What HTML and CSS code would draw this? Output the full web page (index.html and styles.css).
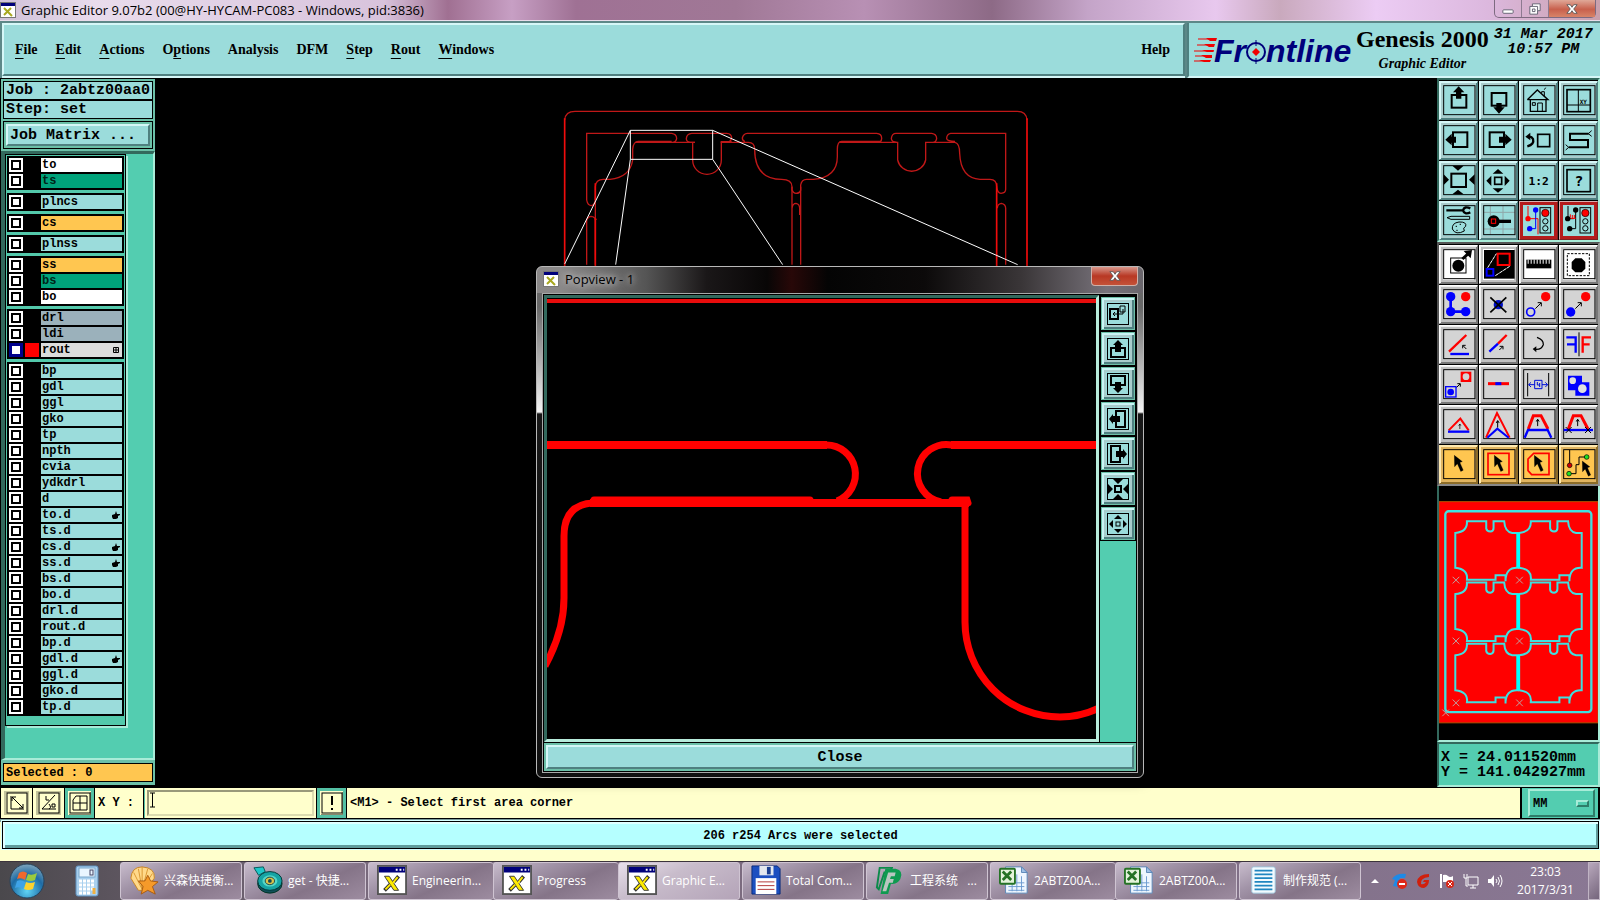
FILE: index.html
```html
<!DOCTYPE html>
<html lang="en">
<head>
    <meta charset="UTF-8">
    <meta name="viewport" content="width=device-width, initial-scale=1.0">
    <title>Graphic Editor 9.07b2</title>
    <link rel="stylesheet" href="styles.css">
</head>
<body>
    <!-- Shared symbols -->
    <svg class="symbols" aria-hidden="true">
        <symbol id="xwin" viewBox="0 0 32 32">
            <rect x="1" y="1" width="30" height="30" fill="#fff" stroke="#555" stroke-width="2"/>
            <rect x="2" y="2" width="28" height="6" fill="#00007b"/>
            <path d="M20 4h2v2h-2zM24 4h2v2h-2zM28 4h1v2h-1z" fill="#fff"/>
            <path d="M8 12h5l10 15h-5z" fill="#ffeb00" stroke="#333"/>
            <path d="M23 12l-5 6M14 21l-6 6" stroke="#333" stroke-width="4"/>
            <path d="M22 13l-5 6M14 21l-5 5" stroke="#ffeb00" stroke-width="2"/>
        </symbol>
        <symbol id="xwin-small" viewBox="0 0 16 16">
            <rect x="0.5" y="0.5" width="15" height="15" fill="#fff" stroke="#777"/>
            <rect x="1" y="1" width="14" height="3" fill="#00007b"/>
            <path d="M4 6L12 14M11 6L4 13" stroke="#a8a820" stroke-width="2"/>
        </symbol>
        <symbol id="frame" viewBox="6 6 105 105">
            <rect x="14" y="14" width="94" height="87" fill="none" stroke="#000" stroke-width="3"/>
        </symbol>
        <symbol id="pointer" viewBox="0 0 40 60">
            <path d="M2 2L28 22L20 25L31 50L23 54L12 29L3 39Z" fill="#000"/>
        </symbol>
        <symbol id="up" viewBox="0 0 12 24">
            <path d="M6 3V24M1 10L6 3L11 10" fill="none" stroke="#000" stroke-width="3"/>
        </symbol>
        <symbol id="sheet" viewBox="0 0 32 32">
            <path d="M7 2H24L30 8V30H7Z" fill="#eef6ff" stroke="#5b86b8"/>
            <path d="M24 2V8H30Z" fill="#9fc0e6" stroke="#5b86b8"/>
            <path d="M10 19H27M10 23H27M10 27H27M14 15V28M19 10V28M24 12V28" stroke="#6c9bd0"/>
            <rect x="1" y="4" width="16" height="16" rx="1" fill="#e4f3dc" stroke="#267326" stroke-width="2"/>
            <path d="M4 7L13 16M13 7L4 16" stroke="#267326" stroke-width="3"/>
        </symbol>
        <symbol id="hand" viewBox="0 0 8 8">
            <path d="M4 0L5 3H8V4L6 5V7L4 8H1L0 6V4L3 3Z"/>
        </symbol>
    </svg>

    <header class="titlebar">
        <svg class="title-icon"><use href="#xwin-small"/></svg>
        <h1>Graphic Editor 9.07b2 (00@HY-HYCAM-PC083 - Windows, pid:3836)</h1>
        <div class="win-controls">
            <button aria-label="Minimize"><svg viewBox="0 0 14 14"><rect x="1" y="8" width="12" height="4" rx="1" fill="#fff" stroke="#556"/></svg></button>
            <button aria-label="Restore"><svg viewBox="0 0 14 14"><path d="M4 1H13V9H10V13H1V4H4Z" fill="#fff" stroke="#556"/><path d="M4 7H7V10H4ZM4 4H10V9" fill="none" stroke="#556"/></svg></button>
            <button class="close" aria-label="Close"><svg viewBox="0 0 14 14"><path d="M1 2H5L7 5L9 2H13L9 7L13 12H9L7 9L5 12H1L5 7Z" fill="#fff" stroke="#555"/></svg></button>
        </div>
    </header>

    <div class="topbar">
        <nav class="menu">
            <a href="#"><u>F</u>ile</a>
            <a href="#"><u>E</u>dit</a>
            <a href="#"><u>A</u>ctions</a>
            <a href="#">O<u>p</u>tions</a>
            <a href="#">Analysis</a>
            <a href="#">DFM</a>
            <a href="#"><u>S</u>tep</a>
            <a href="#"><u>R</u>out</a>
            <a href="#"><u>W</u>indows</a>
            <a href="#" class="help">Help</a>
        </nav>
        <div class="brand">
            <svg class="logo" viewBox="0 0 162 34">
                <path d="M4 5H20M3 11H20M0 17H20M1 22H18M0 27H16" stroke="#f00000" stroke-width="1"/>
                <path d="M12 4H23L22 7H16ZM10 10H21L20 13H15ZM8 16H20L19 18H13ZM7 21H18V24H12ZM5 26H17L16 28H10Z" fill="#f00000"/>
                <text class="logo-text" x="20" y="28">Fr</text>
                <circle cx="62" cy="18" r="9" fill="none" stroke="#00007b" stroke-width="2"/>
                <path d="M62 14L66 18L62 22L58 18Z" fill="#f00000"/>
                <path d="M62 6V12M62 24V30" stroke="#00007b" stroke-width="1"/>
                <text class="logo-text" x="72" y="28">ntline</text>
            </svg>
            <div class="product">
                <strong>Genesis 2000</strong>
                <em>Graphic Editor</em>
            </div>
            <div class="date">31 Mar 2017<br>10:57 PM</div>
        </div>
    </div>

    <div class="workspace">
        <aside class="left-panel">
            <div class="job">Job : 2abtz00aa0</div>
            <div class="job">Step: set</div>
            <div class="matrix"><button>Job Matrix ...</button></div>
            <div class="layers">
                <div class="layer-list">
                    <div class="group">
                        <label class="layer white"><input type="checkbox"><i></i><span>to</span></label>
                        <label class="layer green"><input type="checkbox"><i></i><span>ts</span></label>
                    </div>
                    <div class="group">
                        <label class="layer"><input type="checkbox"><i></i><span>plncs</span></label>
                    </div>
                    <div class="group">
                        <label class="layer orange"><input type="checkbox"><i></i><span>cs</span></label>
                    </div>
                    <div class="group">
                        <label class="layer"><input type="checkbox"><i></i><span>plnss</span></label>
                    </div>
                    <div class="group">
                        <label class="layer orange"><input type="checkbox"><i></i><span>ss</span></label>
                        <label class="layer green"><input type="checkbox"><i></i><span>bs</span></label>
                        <label class="layer white"><input type="checkbox"><i></i><span>bo</span></label>
                    </div>
                    <div class="group">
                        <label class="layer slate"><input type="checkbox"><i></i><span>drl</span></label>
                        <label class="layer slate"><input type="checkbox"><i></i><span>ldi</span></label>
                        <label class="layer current"><input type="checkbox" checked><i></i><span>rout<svg viewBox="0 0 8 8"><path d="M1.5 1.5H6.5V6.5H1.5ZM1 4H7M4 1V7" fill="none" stroke="#000"/></svg></span></label>
                    </div>
                    <div class="group">
                        <label class="layer"><input type="checkbox"><i></i><span>bp</span></label>
                        <label class="layer"><input type="checkbox"><i></i><span>gdl</span></label>
                        <label class="layer"><input type="checkbox"><i></i><span>ggl</span></label>
                        <label class="layer"><input type="checkbox"><i></i><span>gko</span></label>
                        <label class="layer"><input type="checkbox"><i></i><span>tp</span></label>
                        <label class="layer"><input type="checkbox"><i></i><span>npth</span></label>
                        <label class="layer"><input type="checkbox"><i></i><span>cvia</span></label>
                        <label class="layer"><input type="checkbox"><i></i><span>ydkdrl</span></label>
                        <label class="layer"><input type="checkbox"><i></i><span>d</span></label>
                        <label class="layer"><input type="checkbox"><i></i><span>to.d<svg><use href="#hand"/></svg></span></label>
                        <label class="layer"><input type="checkbox"><i></i><span>ts.d</span></label>
                        <label class="layer"><input type="checkbox"><i></i><span>cs.d<svg><use href="#hand"/></svg></span></label>
                        <label class="layer"><input type="checkbox"><i></i><span>ss.d<svg><use href="#hand"/></svg></span></label>
                        <label class="layer"><input type="checkbox"><i></i><span>bs.d</span></label>
                        <label class="layer"><input type="checkbox"><i></i><span>bo.d</span></label>
                        <label class="layer"><input type="checkbox"><i></i><span>drl.d</span></label>
                        <label class="layer"><input type="checkbox"><i></i><span>rout.d</span></label>
                        <label class="layer"><input type="checkbox"><i></i><span>bp.d</span></label>
                        <label class="layer"><input type="checkbox"><i></i><span>gdl.d<svg><use href="#hand"/></svg></span></label>
                        <label class="layer"><input type="checkbox"><i></i><span>ggl.d</span></label>
                        <label class="layer"><input type="checkbox"><i></i><span>gko.d</span></label>
                        <label class="layer"><input type="checkbox"><i></i><span>tp.d</span></label>
                    </div>
                </div>
            </div>
            <div class="selected">Selected : 0</div>
        </aside>

        <main class="canvas">
            <svg class="board" viewBox="0 0 1282 709" preserveAspectRatio="xMinYMin meet">
                <g transform="translate(375 12) scale(.33333)" fill="none" stroke="#c01818" stroke-width="4">
                    <path d="M104 90Q106 64 135 64H1462Q1489 64 1491 90"/>
                    <path d="M170 330V130H425Q440 132 440 146Q438 157 428 157M170 330Q173 347 185 347Q193 345 196 332"/>
                    <path d="M196 524V290Q197 268 220 268H240Q300 262 308 210V178Q310 154 325 154H425M318 157H495"/>
                    <path d="M488 155V210A43 43 0 0 0 574 210V155H605M495 157H480Q469 155 469 146Q470 131 485 130H590Q605 131 605 144Q602 155 595 157"/>
                    <path d="M645 155Q637 152 637 144Q640 131 652 130H1040Q1055 131 1055 145Q1054 157 1045 157"/>
                    <path d="M572 157H655Q674 157 674 178Q674 268 755 268Q786 268 786 290V300Q790 310 798 310Q810 310 812 300V285Q815 268 830 268H850Q922 262 922 200V178Q922 154 935 154H1050"/>
                    <path d="M928 157H1103V210A43 43 0 0 0 1187 210V157H1275Q1289 160 1289 190Q1292 265 1350 268H1380Q1400 268 1400 290Q1402 310 1413 310Q1427 310 1427 298V130H1262Q1250 132 1250 146Q1252 154 1275 154"/>
                    <path d="M1100 157Q1084 157 1084 145Q1086 130 1098 130H1205Q1220 132 1220 146Q1218 157 1210 157"/>
                    <path d="M170 524V390Q175 379 183 379Q195 381 196 388H200M786 290V524M812 290V524M786 355Q788 340 798 340Q809 342 809 355V375M1427 524V355Q1427 342 1414 340Q1402 342 1402 355"/>
                    <path d="M104 85V530M1491 85V530M196 280V330M196 385V530M1400 280V530" stroke="#f00c0c" stroke-width="5"/>
                </g>
                <g transform="translate(375 12) scale(.33333)" fill="none" stroke="#fff" stroke-width="3">
                    <path d="M301 121H548V208H301ZM301 121L104 522M301 208L257 524M548 208L758 524M548 121L1463 524"/>
                </g>
            </svg>

            <section class="popview" aria-label="Popview - 1">
                <div class="pop-title">
                    <svg class="title-icon"><use href="#xwin-small"/></svg>
                    <h2>Popview - 1</h2>
                    <button aria-label="Close window"><svg viewBox="0 0 14 14"><path d="M1 2H5L7 5L9 2H13L9 7L13 12H9L7 9L5 12H1L5 7Z" fill="#fff" stroke="#555"/></svg></button>
                </div>
                <div class="pop-body">
                    <div class="pop-main">
                        <div class="pop-view">
                            <svg viewBox="0 0 549 441" fill="none" stroke="#f00" stroke-width="7">
                                <path d="M0 3H549" stroke-width="4" stroke="#e80c0c"/>
                                <path d="M0 147H280M549 147H404" stroke-width="8"/>
                                <path d="M279 147A29 29 0 0 1 290 203M405 147A29 29 0 0 0 394 204"/>
                                <path d="M43 205H422" stroke-width="8"/>
                                <path d="M47 202H263M405 202H420L421 205" stroke-linecap="round"/>
                                <path d="M47 205Q17 206 17 238V300Q17 333 -2 368"/>
                                <path d="M418 205V324A95 95 0 0 0 513 419Q534 419 552 410"/>
                            </svg>
                        </div>
                        <div class="pop-tools">
                            <button aria-label="Pop out"><svg viewBox="0 0 22 22"><rect x="3" y="6" width="8" height="10" stroke-width="2"/><path d="M13 3H18V9H13ZM16 6V11H6M8 9L6 11L8 13"/></svg></button>
                            <button aria-label="Pan up"><svg viewBox="0 0 22 22"><rect x="4" y="10" width="14" height="9" stroke-width="2"/><path class="s" d="M11 2L16 7H14V14H8V7H6Z"/></svg></button>
                            <button aria-label="Pan down"><svg viewBox="0 0 22 22"><rect x="4" y="3" width="14" height="9" stroke-width="2"/><path class="s" d="M11 20L16 15H14V9H8V15H6Z"/></svg></button>
                            <button aria-label="Pan left"><svg viewBox="0 0 22 22"><rect x="9" y="3" width="9" height="16" stroke-width="2"/><path class="s" d="M2 11L6 6V8H13V14H6V16Z"/></svg></button>
                            <button aria-label="Pan right"><svg viewBox="0 0 22 22"><rect x="4" y="3" width="9" height="16" stroke-width="2"/><path class="s" d="M20 11L16 6V8H9V14H16V16Z"/></svg></button>
                            <button aria-label="Zoom in"><svg viewBox="0 0 22 22"><rect x="8" y="8" width="6" height="6" stroke-width="2"/><path class="s" d="M6 1H16L11 6ZM6 21H16L11 16ZM1 6V16L6 11ZM21 6V16L16 11Z"/></svg></button>
                            <button aria-label="Zoom out"><svg viewBox="0 0 22 22"><rect x="9" y="9" width="4" height="4"/><path class="s" d="M7 6H15L11 2ZM7 16H15L11 20ZM6 7V15L2 11ZM16 7V15L20 11Z"/></svg></button>
                        </div>
                    </div>
                    <div class="pop-close"><button>Close</button></div>
                </div>
            </section>
        </main>

        <aside class="right-panel">
            <div class="tools view-tools">
                <button aria-label="Pan up"><svg viewBox="6 6 105 105"><use href="#frame" x="6" y="6" width="105" height="105"/><rect x="38" y="42" width="44" height="38" stroke-width="6"/><path class="s" d="M59 16L76 34H67V53H51V34H42Z"/></svg></button>
                <button aria-label="Pan down"><svg viewBox="6 6 105 105"><use href="#frame" x="6" y="6" width="105" height="105"/><rect x="38" y="36" width="44" height="38" stroke-width="6"/><path class="s" d="M60 98L43 79H52V66H68V79H77Z"/></svg></button>
                <button aria-label="Home"><svg viewBox="6 6 105 105"><use href="#frame" x="6" y="6" width="105" height="105"/><path d="M25 56L55 27L87 56H25M34 57V91H81V57" stroke-width="4"/><path d="M40 65H49V73H40ZM56 91V66H70V91M68 36V32H76V46M76 26L80 20" stroke-width="3"/></svg></button>
                <button aria-label="XY windows"><svg viewBox="6 6 105 105"><use href="#frame" x="6" y="6" width="105" height="105"/><rect x="24" y="26" width="70" height="66" stroke-width="5"/><path d="M58 26V92M24 72H94" stroke-width="3"/><text x="62" y="69" font-size="18">XY</text></svg></button>

                <button aria-label="Pan left"><svg viewBox="6 6 105 105"><use href="#frame" x="6" y="6" width="105" height="105"/><rect x="42" y="34" width="43" height="44" stroke-width="6"/><path class="s" d="M19 56L38 38V47H51V65H38V73Z"/></svg></button>
                <button aria-label="Pan right"><svg viewBox="6 6 105 105"><use href="#frame" x="6" y="6" width="105" height="105"/><rect x="32" y="34" width="43" height="44" stroke-width="6"/><path class="s" d="M98 56L79 38V47H60V65H79V73Z"/></svg></button>
                <button aria-label="Previous view"><svg viewBox="6 6 105 105"><use href="#frame" x="6" y="6" width="105" height="105"/><rect x="56" y="40" width="36" height="37" stroke-width="5"/><path d="M25 76Q47 70 42 54Q38 46 30 47" stroke-width="7"/><path class="s" d="M19 47L34 35V58Z"/></svg></button>
                <button aria-label="Serpentine"><svg viewBox="6 6 105 105"><use href="#frame" x="6" y="6" width="105" height="105"/><path d="M89 38H33V57H87V79H29" stroke-width="6"/><path d="M88 38L98 29M88 38L98 46M29 79L20 71M29 79L20 87" stroke-width="3"/></svg></button>

                <button aria-label="Zoom in"><svg viewBox="6 6 105 105"><use href="#frame" x="6" y="6" width="105" height="105"/><rect x="37" y="38" width="44" height="40" stroke-width="6"/><path class="s" d="M40 14H74L57 29ZM40 100H74L57 86ZM14 40V72L30 56ZM107 40V72L90 56Z"/></svg></button>
                <button aria-label="Zoom out"><svg viewBox="6 6 105 105"><use href="#frame" x="6" y="6" width="105" height="105"/><rect x="47" y="49" width="21" height="21" stroke-width="5"/><path class="s" d="M57 24L73 38H41ZM57 95L73 82H41ZM22 59L37 44V75ZM92 59L77 44V75Z"/></svg></button>
                <button aria-label="Scale one to two"><svg viewBox="6 6 105 105"><use href="#frame" x="6" y="6" width="105" height="105"/><text x="59" y="72" font-size="34" text-anchor="middle">1:2</text></svg></button>
                <button aria-label="Help"><svg viewBox="6 6 105 105"><use href="#frame" x="6" y="6" width="105" height="105"/><rect x="24" y="26" width="70" height="66" stroke-width="5"/><text x="60" y="76" font-size="44" text-anchor="middle">?</text></svg></button>

                <button aria-label="Setup"><svg viewBox="6 6 105 105"><use href="#frame" x="6" y="6" width="105" height="105"/><path d="M22 28H72M94 22Q76 14 72 28Q76 42 94 34" stroke-width="7"/><path d="M24 50L36 46H92V55H36ZM40 84Q38 66 60 63Q84 62 80 76Q70 80 76 90Q50 104 40 84ZM50 76H54M62 70H66M52 88H56" stroke-width="3"/></svg></button>
                <button aria-label="Measure probe"><svg viewBox="6 6 105 105"><path d="M34 15V101M72 15V101M14 34H108M14 84H108" stroke="#8fa6a8" stroke-width="3"/><use href="#frame" x="6" y="6" width="105" height="105"/><circle class="s" cx="44" cy="61" r="18"/><path d="M60 61H96" stroke-width="10"/><rect x="37" y="54" width="13" height="13" stroke="red" stroke-width="3"/></svg></button>
                <button class="alert" aria-label="Net check on"><svg viewBox="6 6 105 105"><path d="M27 15V53H57V100" stroke="red" stroke-width="3"/><path d="M50 27V83H32" stroke="#00f" stroke-width="3"/><circle cx="27" cy="53" r="8" fill="red" stroke="none"/><circle cx="50" cy="27" r="8" fill="#00f" stroke="none"/><circle cx="32" cy="83" r="8" fill="#00f" stroke="none"/><rect x="63" y="20" width="32" height="76" stroke-width="3"/><circle cx="79" cy="36" r="11" fill="red" stroke-width="2"/><circle cx="79" cy="61" r="8" stroke-width="3"/><circle cx="79" cy="82" r="8" stroke-width="3"/></svg></button>
                <button class="alert" aria-label="Net check off"><svg viewBox="6 6 105 105"><path d="M27 15V53H44M50 27V83H32" stroke-width="3"/><path d="M34 50V40M40 52V42M46 52V42M34 52H50" stroke="red" stroke-width="3"/><circle class="s" cx="26" cy="53" r="8"/><circle class="s" cx="50" cy="27" r="8"/><circle class="s" cx="32" cy="83" r="8"/><rect x="63" y="20" width="32" height="76" stroke-width="3"/><circle cx="79" cy="36" r="11" fill="red" stroke-width="2"/><circle cx="79" cy="61" r="8" stroke-width="3"/><circle cx="79" cy="82" r="8" stroke-width="3"/></svg></button>
            </div>

            <div class="tools edit-tools">
                <button class="lit" aria-label="Select feature"><svg viewBox="6 6 105 105"><use href="#frame" x="6" y="6" width="105" height="105"/><rect x="35" y="39" width="46" height="45" stroke-width="3"/><circle class="s" cx="58" cy="62" r="18"/><path d="M70 42L88 26" stroke-width="9"/><path class="s" d="M99 15L74 18L95 40Z"/></svg></button>
                <button class="lit" aria-label="Popview"><svg viewBox="6 6 105 105"><rect class="s" x="15" y="15" width="92" height="86"/><rect x="56" y="26" width="36" height="34" stroke="red" stroke-width="6"/><rect x="23" y="72" width="20" height="20" stroke="#00f" stroke-width="6"/><path d="M26 68L52 26M49 92L92 64" stroke="#fff" stroke-width="3" stroke-dasharray="12 2"/></svg></button>
                <button class="lit" aria-label="Ruler"><svg viewBox="6 6 105 105"><use href="#frame" x="6" y="6" width="105" height="105"/><rect class="s" x="22" y="44" width="75" height="26"/><path d="M26 50H96" stroke="#fff" stroke-width="13" stroke-dasharray="3 6"/></svg></button>
                <button class="lit" aria-label="Pad area"><svg viewBox="6 6 105 105"><use href="#frame" x="6" y="6" width="105" height="105"/><rect x="25" y="26" width="66" height="66" stroke-width="3" stroke-dasharray="7 4"/><path class="s" d="M49 40H68L79 51V71L68 82H49L38 71V51Z"/></svg></button>

                <button aria-label="Chain copy"><svg viewBox="6 6 105 105"><use href="#frame" x="6" y="6" width="105" height="105"/><path d="M35 35V80H80" stroke="#00f" stroke-width="8"/><g fill="#00f" stroke="none"><circle cx="35" cy="35" r="14"/><circle cx="35" cy="80" r="14"/><circle cx="80" cy="80" r="14"/></g><circle cx="80" cy="35" r="14" fill="red" stroke="none"/></svg></button>
                <button aria-label="Delete"><svg viewBox="6 6 105 105"><use href="#frame" x="6" y="6" width="105" height="105"/><circle cx="58" cy="59" r="14" fill="#0010c8" stroke="none"/><path d="M34 37L82 82M82 37L34 82" stroke-width="5"/></svg></button>
                <button aria-label="Copy"><svg viewBox="6 6 105 105"><use href="#frame" x="6" y="6" width="105" height="105"/><circle cx="35" cy="81" r="12" stroke="#00f" stroke-width="5"/><circle cx="80" cy="35" r="14" fill="red" stroke="none"/><path d="M49 71L66 54M56 53H67V64" stroke-width="3"/></svg></button>
                <button aria-label="Move"><svg viewBox="6 6 105 105"><use href="#frame" x="6" y="6" width="105" height="105"/><circle cx="35" cy="81" r="14" fill="#00f" stroke="none"/><circle cx="80" cy="35" r="14" fill="red" stroke="none"/><path d="M49 71L66 54M56 53H67V64" stroke-width="3"/></svg></button>

                <button aria-label="Rotate line"><svg viewBox="6 6 105 105"><use href="#frame" x="6" y="6" width="105" height="105"/><path d="M30 80L82 30" stroke="red" stroke-width="7"/><path d="M34 87H90" stroke="#00f" stroke-width="7"/><path d="M82 72L72 62M71 70V61H80" stroke-width="3"/></svg></button>
                <button aria-label="Stretch line"><svg viewBox="6 6 105 105"><use href="#frame" x="6" y="6" width="105" height="105"/><path d="M57 56L83 30" stroke="red" stroke-width="7"/><path d="M31 80L57 56" stroke="#00f" stroke-width="7"/><path d="M61 75L71 65M62 64H72V73" stroke-width="3"/></svg></button>
                <button aria-label="Rotate"><svg viewBox="6 6 105 105"><use href="#frame" x="6" y="6" width="105" height="105"/><path d="M54 37Q74 44 73 59Q68 75 48 73" stroke-width="4"/><path class="s" d="M41 72L52 64V82Z"/></svg></button>
                <button aria-label="Mirror"><svg viewBox="6 6 105 105"><use href="#frame" x="6" y="6" width="105" height="105"/><path d="M22 37H50V83M24 58H50" stroke="#00f" stroke-width="7"/><path d="M60 22V94" stroke-width="3"/><path d="M71 83V37H96M71 58H92" stroke="red" stroke-width="7"/></svg></button>

                <button aria-label="Transform pad"><svg viewBox="6 6 105 105"><use href="#frame" x="6" y="6" width="105" height="105"/><rect x="65" y="20" width="32" height="31" fill="red" stroke="none"/><circle cx="81" cy="35" r="10" fill="#d4d4d4" stroke="none"/><rect x="20" y="65" width="31" height="31" stroke="#00f" stroke-width="4"/><circle cx="35" cy="81" r="10" fill="#00f" stroke="none"/><path d="M53 67L63 57M55 56H64V65" stroke-width="3"/></svg></button>
                <button aria-label="Break"><svg viewBox="6 6 105 105"><use href="#frame" x="6" y="6" width="105" height="105"/><path d="M27 56H90" stroke="red" stroke-width="9"/><path d="M49 56H67" stroke="#00f" stroke-width="9"/></svg></button>
                <button aria-label="Spacing"><svg viewBox="6 6 105 105"><use href="#frame" x="6" y="6" width="105" height="105"/><path d="M26 24V94M89 24V94" stroke-width="3"/><path d="M47 46H69V71H47ZM47 59H29M36 52L29 59L36 66M69 59H86M79 52L86 59L79 66M55 51V60H62M62 54V66" stroke="#0010d8" stroke-width="3"/></svg></button>
                <button aria-label="Merge shapes"><svg viewBox="6 6 105 105"><use href="#frame" x="6" y="6" width="105" height="105"/><path d="M27 32H69V52H91V92H49V76H27Z" fill="#00f" stroke="none"/><circle cx="41" cy="47" r="10" fill="#e0e0e0" stroke="none"/><circle cx="70" cy="71" r="13" fill="#e0e0e0" stroke="none"/></svg></button>

                <button aria-label="Fill corner"><svg viewBox="6 6 105 105"><use href="#frame" x="6" y="6" width="105" height="105"/><path d="M29 76L64 41L89 76" stroke="red" stroke-width="6"/><path d="M27 80H91" stroke="#00f" stroke-width="7"/><use href="#up" x="57" y="55" width="11" height="17"/></svg></button>
                <button aria-label="Sharp corner"><svg viewBox="6 6 105 105"><use href="#frame" x="6" y="6" width="105" height="105"/><path d="M21 98L54 24L92 98" stroke="red" stroke-width="6"/><path d="M25 98L55 71L89 98" stroke="#00f" stroke-width="6"/><use href="#up" x="50" y="44" width="12" height="24"/></svg></button>
                <button aria-label="Taper"><svg viewBox="6 6 105 105"><use href="#frame" x="6" y="6" width="105" height="105"/><path d="M28 72L43 32H66L87 72" stroke="red" stroke-width="9"/><path d="M17 98L27 75H86L97 98" stroke="#00f" stroke-width="7"/><use href="#up" x="50" y="40" width="12" height="24"/></svg></button>
                <button aria-label="Trim taper"><svg viewBox="6 6 105 105"><use href="#frame" x="6" y="6" width="105" height="105"/><path d="M28 72L43 32H66L87 72" stroke="red" stroke-width="9"/><path d="M14 75H102" stroke="#00f" stroke-width="7"/><path d="M20 66L38 84M38 66L20 84M78 66L96 84M96 66L78 84" stroke-width="3"/><use href="#up" x="50" y="40" width="12" height="24"/></svg></button>

                <button class="pick" aria-label="Select"><svg viewBox="6 6 105 105"><use href="#frame" x="6" y="6" width="105" height="105"/><use href="#pointer" x="44" y="29" width="37" height="56"/></svg></button>
                <button class="pick" aria-label="Select in box"><svg viewBox="6 6 105 105"><use href="#frame" x="6" y="6" width="105" height="105"/><rect x="27" y="25" width="63" height="64" stroke="red" stroke-width="5"/><use href="#pointer" x="44" y="29" width="37" height="56"/></svg></button>
                <button class="pick" aria-label="Select in polygon"><svg viewBox="6 6 105 105"><use href="#frame" x="6" y="6" width="105" height="105"/><path d="M44 25H90V89H38L27 77V42Z" stroke="red" stroke-width="5"/><use href="#pointer" x="44" y="29" width="37" height="56"/></svg></button>
                <button class="pick" aria-label="Select net"><svg viewBox="6 6 105 105"><use href="#frame" x="6" y="6" width="105" height="105"/><path d="M32 15V61M30 86H51V59H60V36H83" stroke-width="3"/><circle cx="32" cy="61" r="7" fill="#d00000" stroke-width="2"/><circle cx="83" cy="36" r="7" fill="#20e020" stroke-width="2"/><circle cx="30" cy="86" r="7" fill="#20e020" stroke-width="2"/><use href="#pointer" x="68" y="46" width="35" height="53"/></svg></button>
            </div>

            <div class="preview">
                <svg viewBox="26 12 478 760" preserveAspectRatio="xMidYMin meet">
                    <rect x="26" y="59" width="478" height="665" fill="#f00" stroke="#b05000" stroke-width="3"/>
                    <rect x="45" y="88" width="439" height="604" rx="10" fill="none" stroke="#3fe0e0" stroke-width="7"/>
                    <defs>
                        <path id="piece" d="M110 118H168V140Q170 149 180 149Q190 148 190 138V118H222Q224 150 246 153H263V258Q226 256 226 298V280H196V294H110Q114 262 75 258V153Q112 150 110 118Z" fill="none" stroke="#3fe0e0" stroke-width="6"/>
                    </defs>
                    <use href="#piece"/>
                    <use href="#piece" x="192"/>
                    <use href="#piece" y="184"/>
                    <use href="#piece" x="192" y="184"/>
                    <use href="#piece" y="368"/>
                    <use href="#piece" x="192" y="368"/>
                    <path d="M264 153V258M264 337V442M264 521V626" stroke="#00ffff" stroke-width="11"/>
                    <path d="M67 285L87 305M87 285L67 305M258 285L278 305M278 285L258 305M67 468L87 488M87 468L67 488M258 468L278 488M278 468L258 488M67 654L87 674M87 654L67 674M258 654L278 674M278 654L258 674M36 684L56 704M56 684L36 704" stroke="#c0a0a0" stroke-width="3"/>
                </svg>
            </div>
            <div class="coords">X = 24.011520mm<br>Y = 141.042927mm</div>
        </aside>
    </div>

    <div class="command">
        <button class="cmd" aria-label="Absolute"><svg viewBox="0 0 22 22"><rect x="1" y="1" width="20" height="20"/><path d="M5 4V17H18M6 5L17 16M6 9V5H10M17 12V16H13"/></svg></button>
        <button class="cmd" aria-label="Polar"><svg viewBox="0 0 22 22"><rect x="1" y="1" width="20" height="20"/><path d="M17 3L4 17H18M8 4V8H11M11 12Q14 16 11 17M14 12H17V15H14Z"/></svg></button>
        <button class="cmd teal" aria-label="Grid"><svg viewBox="0 0 22 22"><rect x="1" y="1" width="20" height="20"/><path d="M7 4H18V18H4V8ZM11 4V18M4 11H18"/></svg></button>
        <label for="xy">X Y :</label>
        <div class="entry">
            <input id="xy" type="text">
            <svg class="ibeam" viewBox="0 0 7 16"><path d="M1 1H6M1 15H6M3.5 1V15" stroke="#000"/></svg>
        </div>
        <button class="cmd teal" aria-label="Alert"><svg viewBox="0 0 22 22"><rect x="1" y="1" width="20" height="20"/><path d="M11 4V13M11 16V18" stroke-width="2"/></svg></button>
        <p class="message">&lt;M1&gt; - Select first area corner</p>
        <div class="unit-box">
            <div class="unit">
                <select aria-label="Units"><option>MM</option><option>INCH</option></select>
                <span class="knob"></span>
            </div>
        </div>
    </div>

    <div class="status"><p>206 r254 Arcs were selected</p></div>

    <footer class="taskbar">
        <div class="launch">
            <button aria-label="Start">
                <svg width="38" height="38" viewBox="0 0 38 38">
                    <defs><radialGradient id="orb" cx=".5" cy=".8" r=".8"><stop offset="0" stop-color="#5fd4f5"/><stop offset=".6" stop-color="#1d6ba5"/><stop offset="1" stop-color="#7fa5bb"/></radialGradient></defs>
                    <circle cx="19" cy="19" r="17" fill="url(#orb)" stroke="#26435c"/>
                    <path d="M11 11Q15 8 19 11L17 18Q13 15 9 17Z" fill="#f0692c"/>
                    <path d="M20 12Q24 14 29 11L27 18Q23 20 18 18Z" fill="#9bcb3c"/>
                    <path d="M9 19Q13 17 17 20L15 27Q11 24 7 26Z" fill="#3fa3e8"/>
                    <path d="M18 20Q22 22 27 20L25 27Q20 29 16 27Z" fill="#fcd22f"/>
                </svg>
            </button>
            <button aria-label="Calculator">
                <svg width="24" height="32" viewBox="0 0 24 32">
                    <rect x="1" y="1" width="22" height="30" rx="2" fill="#a9d0ee" stroke="#5e90bd"/>
                    <rect x="4" y="3" width="16" height="9" fill="#eaf6ff" stroke="#7ba8cc"/>
                    <rect x="15" y="5" width="3" height="5" fill="none" stroke="#446"/>
                    <path d="M4 16H20M4 20H20M4 24H20M4 28H16" stroke="#fff" stroke-width="3" stroke-dasharray="3 1"/>
                    <path d="M19 23V29" stroke="#f0b040" stroke-width="3"/>
                </svg>
            </button>
        </div>
        <button class="task">
            <svg viewBox="0 0 32 32"><path d="M2 14Q3 2 14 2Q28 3 27 14L18 27H10Z" fill="#ffd98a" stroke="#c98320"/><path d="M14 26L5 8M14 26L10 4M14 26V2M14 26L20 4M14 26L25 9" stroke="#d8942f"/><path d="M20 11L23 17L31 18L25 23L28 31L20 27L13 31L15 23L10 17L17 17Z" fill="#f59a2a" stroke="#a85a10"/></svg>
            <span>兴森快捷衡...</span>
        </button>
        <button class="task">
            <svg viewBox="0 0 32 32"><ellipse cx="18" cy="20" rx="13" ry="10" fill="#0f4f58" stroke="#032"/><ellipse cx="18" cy="17" rx="13" ry="10" fill="#16a3a3" stroke="#033"/><ellipse cx="18" cy="17" rx="8" ry="6" fill="#54d6c6"/><ellipse cx="18" cy="17" rx="5" ry="4" fill="#d9c34a" stroke="#244"/><ellipse cx="18" cy="17" rx="2" ry="2" fill="#145"/><path d="M1 3L11 2L13 7L6 11Z" fill="#1fc8c8" stroke="#055"/></svg>
            <span>get - 快捷...</span>
        </button>
        <button class="task joined">
            <svg><use href="#xwin"/></svg>
            <span>Engineerin...</span>
        </button>
        <button class="task joined">
            <svg><use href="#xwin"/></svg>
            <span>Progress</span>
        </button>
        <button class="task active">
            <svg><use href="#xwin"/></svg>
            <span>Graphic E...</span>
        </button>
        <button class="task">
            <svg viewBox="0 0 32 32"><path d="M1 1H28L31 4V31H1Z" fill="#1c4fc0" stroke="#0a2a78"/><rect x="9" y="1" width="15" height="10" fill="#e4e8ee"/><rect x="17" y="2" width="4" height="8" fill="#1c3f90"/><rect x="5" y="14" width="22" height="17" fill="#fff"/><path d="M7 18H25M7 22H25M7 26H25" stroke="#b03030"/></svg>
            <span>Total Com...</span>
        </button>
        <button class="task">
            <svg viewBox="0 0 32 32"><path d="M5 3H18L16 8H10L4 26L2 24Z" fill="none" stroke="#0c8a4a" stroke-width="2"/><path d="M11 4H22Q31 6 27 15Q24 21 17 20L14 31H6Z" fill="#0f9a50"/><path d="M14 8H22L21 12H17L16 15H20L19 19H15L12 28H8Z" fill="#b9c6c0"/></svg>
            <span>工程系统 &nbsp; ...</span>
        </button>
        <button class="task joined">
            <svg><use href="#sheet"/></svg>
            <span>2ABTZ00A...</span>
        </button>
        <button class="task">
            <svg><use href="#sheet"/></svg>
            <span>2ABTZ00A...</span>
        </button>
        <button class="task">
            <svg viewBox="0 0 32 32"><rect x="4" y="2" width="25" height="28" rx="2" fill="#f2fbff" stroke="#9cc4dc"/><path d="M7 6H26M7 10H26M7 14H26M7 18H26M7 22H26M7 26H26" stroke="#1f86c0" stroke-width="2"/></svg>
            <span>制作规范 (...</span>
        </button>
        <div class="tray">
            <svg viewBox="0 0 16 16"><path d="M4 10L8 6L12 10Z" fill="#fff"/></svg>
            <svg viewBox="0 0 16 16"><path d="M1 6Q5 0 15 1L14 5H9L7 14L2 13L4 7Z" fill="#1e8ae6"/><circle cx="11" cy="11" r="5" fill="#e02818"/><path d="M8 11H14" stroke="#fff" stroke-width="2"/></svg>
            <svg viewBox="0 0 16 16"><path d="M14 1Q3 1 2 9Q3 15 9 15Q14 13 14 7H9L8 9H11Q9 12 6 11Q5 5 14 4Z" fill="#d0200c"/></svg>
            <svg viewBox="0 0 16 16"><path d="M2 1V15" stroke="#fff" stroke-width="2"/><path d="M4 2Q7 1 9 3T14 3V9H4Z" fill="#fff"/><circle cx="11" cy="11" r="4" fill="#d82818"/><path d="M9 9L13 13M13 9L9 13" stroke="#fff"/></svg>
            <svg viewBox="0 0 16 16"><path d="M5 4H15V12H5ZM7 15H13M10 12V15M1 1V5H4V1M3 5V13H5" fill="none" stroke="#fff"/></svg>
            <svg viewBox="0 0 16 16"><path d="M1 6H4L7 2V14L4 10H1Z" fill="#fff"/><path d="M9 6Q11 8 9 10M11 4Q14 8 11 12M13 2Q17 8 13 14" fill="none" stroke="#fff"/></svg>
            <div class="clock">23:03<br>2017/3/31</div>
            <button class="show-desktop" aria-label="Show desktop"></button>
        </div>
    </footer>
</body>
</html>
```

FILE: styles.css
```css
* {
    box-sizing: border-box;
}
body {
    margin: 0;
    min-height: 100vh;
    display: flex;
    flex-direction: column;
    background-color: #000;
    color: #000;
    font-family: "Liberation Mono", monospace;
    font-size: 12px;
    font-weight: bold;
}
button,
input,
select {
    font: inherit;
    color: inherit;
    margin: 0;
    padding: 0;
    border: 0;
    border-radius: 0;
    background: none;
}
h1,
h2,
p {
    margin: 0;
}
svg {
    display: block;
    flex-shrink: 0;
}
.symbols {
    position: absolute;
    width: 0;
    height: 0;
}

/* Title bar */
.titlebar {
    height: 21px;
    display: flex;
    align-items: center;
    gap: 5px;
    border-bottom: 1px solid #e8dcea;
    background: linear-gradient(90deg, #cfc0d8 0%, #e9dcec 6%, #d8c3dc 24%, #a07092 28%, #c79fc4 32%, #9f7194 36%, #a07896 46%, #b890b4 54%, #8d6a86 62%, #c4a4c8 68%, #e8c8ee 76%, #c9a9bd 80%, #ecccf4 86%, #dcb8de 93%, #c9a0ac 100%);
}
.title-icon {
    width: 16px;
    height: 16px;
}
.titlebar h1,
.pop-title h2 {
    font-family: "Open Sans", "Noto Sans", sans-serif;
    font-size: 13px;
    font-weight: normal;
}
.titlebar h1 {
    flex: 1;
}
.win-controls {
    display: flex;
    align-self: flex-start;
    margin-right: 4px;
    border: 1px solid #7d6a80;
    border-top: 0;
    border-radius: 0 0 5px 5px;
}
.win-controls button {
    width: 27px;
    height: 17px;
    display: grid;
    place-items: center;
    border-right: 1px solid #8d7a90;
}
.win-controls .close {
    width: 46px;
    border-right: 0;
    background: linear-gradient(#e0a898, #c8604c 55%, #d88468);
}
.win-controls svg {
    width: 12px;
    height: 12px;
}

/* Menu and logo */
.topbar {
    display: flex;
    height: 57px;
    background-color: #5d8888;
    padding-top: 2px;
}
.menu {
    flex: 1;
    display: flex;
    align-items: center;
    gap: 18px;
    margin-left: 2px;
    padding: 0 13px 0 11px;
    background-color: #9bdcdb;
    border: 2px solid #d5f7f7;
    border-right-color: #4f8080;
    border-bottom-color: #4f8080;
    box-shadow: 0 2px 0 #d5f7f7;
    margin-bottom: 2px;
}
.menu a {
    font-family: "Liberation Serif", serif;
    font-size: 14px;
    color: #000;
    text-decoration: none;
}
.menu u {
    text-underline-offset: 4px;
}
.menu .help {
    margin-left: auto;
}
.brand {
    width: 413px;
    display: flex;
    padding: 2px 2px 0 5px;
    margin-left: 2px;
    background-color: #9bdcdb;
    border-left: 2px solid #4f8080;
    border-bottom: 2px solid #d5f7f7;
}
.logo {
    width: 162px;
    height: 34px;
    margin-top: 9px;
}
.logo-text {
    font: italic bold 32px "Liberation Sans", Arial, sans-serif;
    fill: #00007b;
}
.product {
    display: flex;
    flex-direction: column;
    align-items: center;
    font-family: "Liberation Serif", serif;
}
.product strong {
    font-size: 24px;
    line-height: 28px;
}
.product em {
    font-size: 14px;
    line-height: 22px;
}
.date {
    flex: 1;
    text-align: center;
    font-size: 15px;
    font-style: italic;
    line-height: 15px;
    padding-top: 2px;
    white-space: nowrap;
}

/* Left panel */
.workspace {
    flex: 1;
    display: flex;
}
.left-panel {
    width: 154px;
    margin: 1px 0 2px 1px;
    display: flex;
    flex-direction: column;
    background-color: #6cc0a8;
    padding-top: 2px;
}
.job {
    margin: 0 2px;
    height: 19px;
    line-height: 18px;
    padding-left: 2px;
    font-size: 15px;
    border: 1px solid #000;
    background-color: #9bdcdb;
    white-space: nowrap;
    overflow: hidden;
}
.matrix {
    margin: 2px;
    padding: 2px;
    border: 1px solid #000;
}
.matrix button {
    width: 100%;
    height: 22px;
    padding-left: 2px;
    text-align: left;
    font-size: 15px;
    background-color: #9bdcdb;
    border: 2px solid #d5f7f7;
    border-right-color: #4f8080;
    border-bottom-color: #4f8080;
}
.layers {
    flex: 1;
    display: flex;
    align-items: flex-start;
    padding-bottom: 2px;
    background-color: #53cdb0;
    border-top: 3px solid #33695d;
    border-left: 4px solid #33695d;
    border-right: 2px solid #a8ecd8;
    border-bottom: 2px solid #a8ecd8;
}
.layer-list {
    display: flex;
    flex-direction: column;
    gap: 3px;
    padding: 1px 1px 9px;
    background-color: #53c9ab;
    border: 1px solid #000;
    box-shadow: 2px 2px 0 #a8ecd8;
}
.group {
    display: flex;
    flex-direction: column;
    gap: 2px;
    padding: 2px;
    background-color: #000;
}
.layer {
    display: flex;
    gap: 2px;
    height: 14px;
}
.layer input {
    appearance: none;
    width: 14px;
    height: 14px;
    border: 2px solid #fff;
    background-color: #fff;
    box-shadow: inset 0 0 0 2px #000;
}
.layer i {
    width: 14px;
}
.layer span {
    width: 81px;
    display: flex;
    align-items: center;
    justify-content: space-between;
    padding: 0 2px 0 1px;
    line-height: 14px;
    background-color: #9bdcdb;
}
.layer svg {
    width: 8px;
    height: 8px;
}
.layer.white span {
    background-color: #fff;
}
.layer.green span {
    background-color: #00a37b;
    color: #002418;
}
.layer.orange span {
    background-color: #ffc650;
}
.layer.slate span {
    background-color: #9bb1bb;
}
.layer.current span {
    background-color: #dcdcdc;
}
.layer.current i {
    background-color: #f00;
}
.layer.current input {
    border-color: #00008b;
    box-shadow: inset 0 0 0 1px #00008b;
}
.selected {
    margin: 3px 2px;
    height: 19px;
    line-height: 18px;
    padding-left: 2px;
    border: 1px solid #000;
    background-color: #ffc650;
}

/* Drawing area */
.canvas {
    flex: 1;
    position: relative;
    min-width: 0;
}
.board {
    position: absolute;
    width: 100%;
    height: 100%;
}
.popview {
    position: absolute;
    left: 381px;
    top: 188px;
    width: 608px;
    display: flex;
    flex-direction: column;
    padding: 0 5px 4px;
    border: 1px solid #b8b8b8;
    border-radius: 6px;
    background: linear-gradient(90deg, #8a8888 0, #8a8888 4%, #555 18%, #1a1718 28%, #080606 38%, #280808 42%, #040404 48%, #0c0a0a 64%, #3a3638 80%, #77727a 94%, #6a666c 100%) top / 100% 26px no-repeat,
        linear-gradient(#686868 0, #686868 40px, #f4f4f4 145px, #181818 147px, #101010 100%);
    box-shadow: 0 3px 12px rgba(0, 0, 0, 0.5);
}
.pop-title {
    height: 26px;
    display: flex;
    align-items: center;
    gap: 6px;
    padding: 0 0 2px 1px;
}
.pop-title h2 {
    flex: 1;
    text-shadow: 0 0 6px #ccc, 0 0 10px #ccc;
}
.pop-title button {
    align-self: flex-start;
    width: 47px;
    height: 19px;
    display: grid;
    place-items: center;
    border: 1px solid #d0b0a8;
    border-top: 0;
    border-radius: 0 0 4px 4px;
    background: linear-gradient(#d8968a, #b83824 50%, #c45238);
}
.pop-title button svg {
    width: 12px;
    height: 12px;
}
.pop-body {
    border: 1px solid #a8a8a8;
    background-color: #000;
    padding: 1px;
    display: flex;
    flex-direction: column;
    gap: 1px;
}
.pop-main {
    display: flex;
    gap: 1px;
}
.pop-view {
    flex: 1;
    background-color: #000;
    border: 3px solid #33695d;
    border-right-color: #b8ecdc;
    border-bottom-color: #b8ecdc;
}
.pop-view svg {
    width: 100%;
    height: auto;
}
.pop-tools {
    display: flex;
    flex-direction: column;
    gap: 2px;
    width: 36px;
    padding: 2px 1px 1px;
    background: linear-gradient(#000 246px, #53cdb0 246px);
}
.pop-tools button {
    height: 33px;
    display: grid;
    place-items: center;
    background-color: #9bdcdb;
    border: 1px solid #6cc0a8;
    box-shadow: inset 2px 2px 0 #c8f4f4, inset -2px -2px 0 #4f8080, inset 4px 4px 0 #a8cccc, inset -4px -4px 0 #a8cccc;
}
.pop-tools svg {
    width: 22px;
    height: 22px;
    fill: none;
    stroke: #000;
    outline: 1px solid #000;
    outline-offset: -1px;
}
.pop-close {
    padding: 2px;
    background-color: #6cc0a8;
}
.pop-close button {
    width: 100%;
    height: 24px;
    font-size: 15px;
    background-color: #9bdcdb;
    border: 2px solid #d5f7f7;
    border-right-color: #4f8080;
    border-bottom-color: #4f8080;
}

/* Right panel */
.right-panel {
    width: 163px;
    display: flex;
    flex-direction: column;
}
.tools {
    display: grid;
    grid-template-columns: repeat(4, 1fr);
    gap: 1px;
    padding: 1px 0 0;
    background-color: #000;
    border: 2px solid #33695d;
    border-right-color: #a8ecd8;
    border-bottom-color: #a8ecd8;
}
.edit-tools {
    border-color: #555;
    border-right-color: #999;
    border-bottom-color: #888;
}
.tools button {
    height: 39px;
    display: grid;
    place-items: center;
    background-color: #9bdcdb;
    border: 1px solid #d5f7f7;
    border-right-color: #4f8080;
    border-bottom-color: #4f8080;
    box-shadow: inset 1px 1px 0 #d5f7f7, inset -1px -1px 0 #4f8080, inset 3px 3px 0 #a9cccc, inset -3px -3px 0 #a9cccc;
}
.edit-tools button {
    background-color: #d4d4d4;
    border-color: #fff #777 #777 #fff;
    box-shadow: inset 1px 1px 0 #eee, inset -1px -1px 0 #777, inset 3px 3px 0 #c0c0c0, inset -3px -3px 0 #c0c0c0;
}
.edit-tools .lit {
    background-color: #fff;
}
.edit-tools .pick {
    background-color: #ffc650;
    border-color: #ffe9b0 #8c6c28 #8c6c28 #ffe9b0;
    box-shadow: inset 1px 1px 0 #ffe9b0, inset -1px -1px 0 #8c6c28, inset 3px 3px 0 #e0b460, inset -3px -3px 0 #e0b460;
}
.view-tools .alert {
    border-color: #d8b0b0 #7c2020 #7c2020 #d8b0b0;
    box-shadow: inset 0 0 0 3px #b41c1c;
}
.tools svg {
    width: 35px;
    height: 35px;
    fill: none;
    stroke: #000;
}
.tools .s,
.pop-tools .s {
    fill: #000;
    stroke: none;
}
.tools text {
    font-family: "DejaVu Sans Mono", monospace;
    font-weight: bold;
    fill: #000;
    stroke: none;
}
.preview {
    flex: 1;
    min-height: 0;
    background-color: #000;
    border: 2px solid #33695d;
    border-right-color: #a8ecd8;
    border-bottom-color: #a8ecd8;
    border-top: 0;
    overflow: hidden;
}
.preview svg {
    width: 100%;
    height: auto;
}
.coords {
    height: 45px;
    padding: 6px 0 0 2px;
    font-size: 15px;
    line-height: 15px;
    white-space: nowrap;
    background-color: #53cdb0;
    border: 2px solid #33695d;
    border-right-color: #a8ecd8;
    border-bottom-color: #a8ecd8;
}

/* Command line */
.command {
    display: flex;
    align-items: stretch;
    height: 32px;
    padding-left: 1px;
    gap: 1px;
    background-color: #000;
    border-top: 1px solid #000;
    border-bottom: 1px solid #000;
}
.cmd {
    width: 31px;
    display: grid;
    place-items: center;
    background-color: #ffc;
    border: 1px solid #ffc;
    box-shadow: inset 0 0 0 2px #ffc, inset 0 0 0 4px #c4c49c;
}
.cmd.teal {
    width: 29px;
    border: 3px solid #53c0a4;
    box-shadow: inset 1px 1px 0 #ffc, inset -1px -1px 0 #88886a;
}
.cmd svg {
    width: 22px;
    height: 22px;
    fill: none;
    stroke: #000;
}
.command label {
    width: 48px;
    padding-left: 3px;
    line-height: 31px;
    background-color: #ffc;
}
.entry {
    position: relative;
    width: 172px;
    padding: 2px;
    background-color: #ffc;
    border-left: 1px solid #53c0a4;
}
.entry input {
    width: 100%;
    height: 100%;
    background-color: #ffc;
    border: 2px solid #99997a;
    border-right-color: #dcdcb0;
    border-bottom-color: #dcdcb0;
}
.ibeam {
    position: absolute;
    left: 4px;
    top: 4px;
    width: 7px;
    height: 16px;
}
.message {
    flex: 1;
    padding-left: 3px;
    line-height: 31px;
    background-color: #ffc;
}
.unit-box {
    width: 79px;
    padding: 1px 3px 1px 6px;
    background-color: #53cdb0;
    border-left: 1px solid #000;
    border-right: 2px solid #000;
}
.unit {
    height: 100%;
    display: flex;
    align-items: center;
    padding: 1px 4px 0 3px;
    border: 2px solid #a8ecd8;
    border-right-color: #2e7d69;
    border-bottom-color: #2e7d69;
}
.unit select {
    flex: 1;
    min-width: 0;
    appearance: none;
}
.knob {
    width: 13px;
    height: 7px;
    border: 2px solid #a8ecd8;
    border-right-color: #2e7d69;
    border-bottom-color: #2e7d69;
}

/* Status line */
.status {
    padding: 1px 1px 0 2px;
    height: 42px;
    background: linear-gradient(#7a9c9c 3px, #ffc 3px);
}
.status p {
    height: 28px;
    margin-top: 1px;
    line-height: 28px;
    text-align: center;
    background-color: #b5ffff;
    border: 1px solid #000;
    outline: 1px solid #d8ffff;
    box-shadow: inset 2px 2px 0 #e0ffff, inset -2px -3px 0 #5f9c9c;
}

/* Taskbar */
.taskbar {
    display: flex;
    height: 39px;
    border-top: 1px solid #3c343c;
    background: linear-gradient(90deg, #4a484c 0, #5e5660 8%, #7c6c80 25%, #7a6a7e 60%, #8a7894 100%);
    font-family: "Open Sans", "Noto Sans CJK SC", sans-serif;
    font-weight: normal;
    color: #fff;
}
.launch {
    width: 120px;
    display: flex;
    align-items: center;
    gap: 29px;
    padding-left: 8px;
}
.task {
    width: 122px;
    margin-right: 2px;
    display: flex;
    align-items: center;
    gap: 5px;
    padding: 0 0 2px 8px;
    white-space: nowrap;
    overflow: hidden;
    border: 1px solid #cfc4d2;
    border-radius: 3px;
    background: linear-gradient(155deg, #c8bccc 0, #a294a8 30%, #857488 60%, #9d8ca0 100%);
}
.task.joined {
    width: 125px;
    margin-right: 0;
    border-right: 0;
}
.task.active {
    background: linear-gradient(155deg, #e8e0ea 0, #c8bccb 40%, #b4a4b8 100%);
}
.task svg {
    width: 30px;
    height: 30px;
}
.tray {
    flex: 1;
    display: flex;
    align-items: center;
    gap: 8px;
    padding-left: 4px;
}
.tray svg {
    width: 16px;
    height: 16px;
}
.clock {
    flex: 1;
    text-align: center;
    line-height: 18px;
}
.show-desktop {
    align-self: stretch;
    width: 12px;
    border: 1px solid #c0b4c4;
    background: linear-gradient(135deg, #b8a8bc, #75657c);
}
```
